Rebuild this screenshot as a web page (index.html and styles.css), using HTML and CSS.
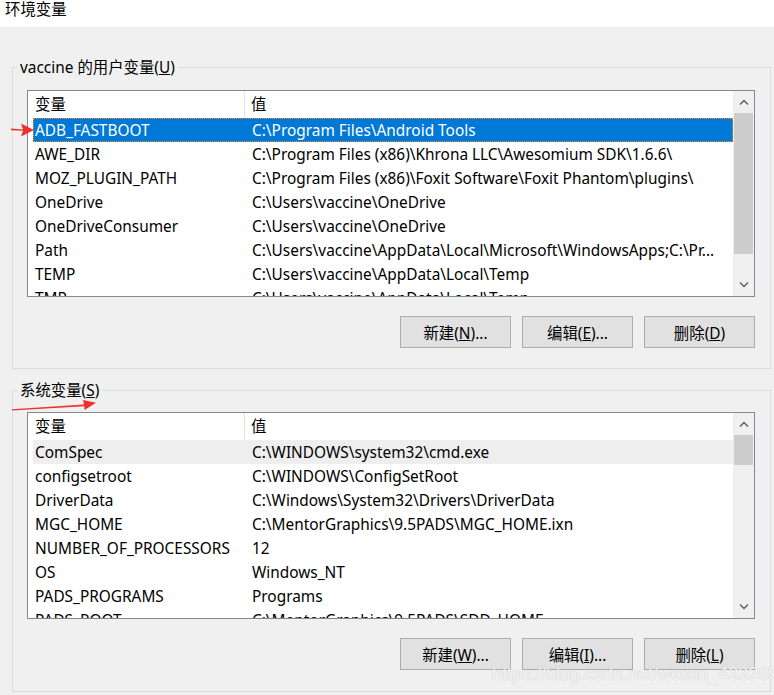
FILE: index.html
```html
<!DOCTYPE html>
<html lang="zh-CN">
<head>
<meta charset="utf-8">
<title>环境变量</title>
<link rel="stylesheet" href="styles.css">
</head>
<body>
<div class="window">
  <div class="titlebar">环境变量</div>
  <div class="content">
    <fieldset class="group group-user">
      <legend>vaccine 的用户变量(<u>U</u>)</legend>
      <div class="group-body">
        <div class="list">
          <div class="list-main">
            <div class="list-head">
              <div class="hcell">变量</div>
              <div class="hcell hcell-val">值</div>
            </div>
            <div class="list-rows">
              <div class="row selected"><span class="c1">ADB_FASTBOOT</span><span class="c2">C:\Program Files\Android Tools</span></div>
              <div class="row"><span class="c1">AWE_DIR</span><span class="c2">C:\Program Files (x86)\Khrona LLC\Awesomium SDK\1.6.6\</span></div>
              <div class="row"><span class="c1">MOZ_PLUGIN_PATH</span><span class="c2">C:\Program Files (x86)\Foxit Software\Foxit Phantom\plugins\</span></div>
              <div class="row"><span class="c1">OneDrive</span><span class="c2">C:\Users\vaccine\OneDrive</span></div>
              <div class="row"><span class="c1">OneDriveConsumer</span><span class="c2">C:\Users\vaccine\OneDrive</span></div>
              <div class="row"><span class="c1">Path</span><span class="c2">C:\Users\vaccine\AppData\Local\Microsoft\WindowsApps;C:\Pr...</span></div>
              <div class="row"><span class="c1">TEMP</span><span class="c2">C:\Users\vaccine\AppData\Local\Temp</span></div>
              <div class="row"><span class="c1">TMP</span><span class="c2">C:\Users\vaccine\AppData\Local\Temp</span></div>
            </div>
          </div>
          <div class="scrollbar">
            <div class="sb-btn"><svg width="10" height="6" viewBox="0 0 10 6"><path d="M1 5.5 L5 1.5 L9 5.5" fill="none" stroke="#606060" stroke-width="1.5"/></svg></div>
            <div class="sb-thumb" style="height:141px"></div>
            <div class="sb-track"></div>
            <div class="sb-btn"><svg width="10" height="6" viewBox="0 0 10 6"><path d="M1 0.5 L5 4.5 L9 0.5" fill="none" stroke="#606060" stroke-width="1.5"/></svg></div>
          </div>
        </div>
        <div class="buttons">
          <button class="btn">新建(<u>N</u>)...</button>
          <button class="btn">编辑(<u>E</u>)...</button>
          <button class="btn">删除(<u>D</u>)</button>
        </div>
      </div>
    </fieldset>

    <fieldset class="group group-sys">
      <legend>系统变量(<u>S</u>)</legend>
      <div class="group-body">
        <div class="list">
          <div class="list-main">
            <div class="list-head">
              <div class="hcell">变量</div>
              <div class="hcell hcell-val">值</div>
            </div>
            <div class="list-rows">
              <div class="row hover"><span class="c1">ComSpec</span><span class="c2">C:\WINDOWS\system32\cmd.exe</span></div>
              <div class="row"><span class="c1">configsetroot</span><span class="c2">C:\WINDOWS\ConfigSetRoot</span></div>
              <div class="row"><span class="c1">DriverData</span><span class="c2">C:\Windows\System32\Drivers\DriverData</span></div>
              <div class="row"><span class="c1">MGC_HOME</span><span class="c2">C:\MentorGraphics\9.5PADS\MGC_HOME.ixn</span></div>
              <div class="row"><span class="c1">NUMBER_OF_PROCESSORS</span><span class="c2">12</span></div>
              <div class="row"><span class="c1">OS</span><span class="c2">Windows_NT</span></div>
              <div class="row"><span class="c1">PADS_PROGRAMS</span><span class="c2">Programs</span></div>
              <div class="row"><span class="c1">PADS_ROOT</span><span class="c2">C:\MentorGraphics\9.5PADS\SDD_HOME</span></div>
            </div>
          </div>
          <div class="scrollbar">
            <div class="sb-btn"><svg width="10" height="6" viewBox="0 0 10 6"><path d="M1 5.5 L5 1.5 L9 5.5" fill="none" stroke="#606060" stroke-width="1.5"/></svg></div>
            <div class="sb-thumb" style="height:30px"></div>
            <div class="sb-track"></div>
            <div class="sb-btn"><svg width="10" height="6" viewBox="0 0 10 6"><path d="M1 0.5 L5 4.5 L9 0.5" fill="none" stroke="#606060" stroke-width="1.5"/></svg></div>
          </div>
        </div>
        <div class="buttons">
          <button class="btn">新建(<u>W</u>)...</button>
          <button class="btn">编辑(<u>I</u>)...</button>
          <button class="btn">删除(<u>L</u>)</button>
        </div>
      </div>
    </fieldset>
  </div>

  <svg class="arrow arrow-1" width="40" height="20" viewBox="0 0 40 20">
    <polygon points="11,8.6 23,9.4 21,3.5 34,10 21,16.5 23,10.8 11,10.2" fill="#f0302f"/>
  </svg>
  <svg class="arrow arrow-2" width="100" height="16" viewBox="0 0 100 16">
    <polygon points="12,14.2 84,9.6 83,5 96,7.8 84.5,15 84.3,11.3 12,15.4" fill="#f0302f"/>
  </svg>
  <div class="watermark">https://blog.csdn.net/weixin_43326587</div>
</div>
</body>
</html>
```

FILE: styles.css
```css
* { box-sizing: border-box; }

html, body {
  margin: 0;
  padding: 0;
  background: #f0f0f0;
}

body {
  font-family: "Noto Sans", "Noto Sans CJK SC", sans-serif;
  font-size: 15.4px;
  color: #000;
}

.window {
  position: relative;
  width: 774px;
  height: 695px;
  overflow: hidden;
  background: #f0f0f0;
}

.titlebar {
  height: 27px;
  background: #fff;
  padding: 0 0 0 5px;
  line-height: 20px;
  font-size: 15.4px;
}

.content {
  padding: 30px 3px 0 12px;
  display: flex;
  flex-direction: column;
  gap: 11px;
}

.group {
  margin: 0;
  padding: 0;
  border: 1px solid #dcdcdc;
  min-width: 0;
}

.group legend {
  margin-left: 4px;
  padding: 1px 3px 0;
  line-height: 20px;
  font-size: 15.4px;
}

.group-body {
  padding: 12px 15px 20px 14px;
}

.group-sys .group-body {
  padding-top: 11px;
  padding-bottom: 21px;
}

.list {
  display: flex;
  height: 207px;
  border: 1px solid #828790;
  background: #fff;
}

.list-main {
  flex: 1;
  min-width: 0;
  overflow: hidden;
  display: flex;
  flex-direction: column;
}

.list-head {
  display: grid;
  grid-template-columns: 217px 1fr;
  height: 27px;
  flex: none;
}

.hcell {
  padding-left: 7px;
  line-height: 27px;
  border-right: 1px solid #e5e5e5;
}

.hcell-val {
  border-right: none;
  padding-left: 6px;
}

.list-rows {
  padding-left: 5px;
}

.row {
  display: grid;
  grid-template-columns: 212px 1fr;
  height: 24px;
  line-height: 25px;
  white-space: nowrap;
}

.row .c1 {
  padding-left: 2px;
  overflow: hidden;
}

.row .c2 {
  padding-left: 7px;
  overflow: hidden;
}

.row.selected {
  background: #0078d7;
  color: #fff;
  outline: 1px dotted #f08c1c;
  outline-offset: -1px;
}

.row.hover {
  background: #eeeeee;
}

.scrollbar {
  width: 21px;
  flex: none;
  background: #f0f0f0;
  display: flex;
  flex-direction: column;
}

.sb-btn {
  height: 22px;
  flex: none;
  display: flex;
  align-items: center;
  justify-content: center;
}

.sb-thumb {
  flex: none;
  margin: 0 1px;
  background: #cdcdcd;
}

.sb-track {
  flex: 1;
}

.buttons {
  display: flex;
  justify-content: flex-end;
  gap: 11px;
  margin-top: 19px;
}

.btn {
  width: 111px;
  height: 32px;
  border: 1px solid #adadad;
  background: #e1e1e1;
  font-family: "Noto Sans", "Noto Sans CJK SC", sans-serif;
  font-size: 15.4px;
  color: #000;
  padding: 0;
  margin: 0;
}

.arrow {
  position: absolute;
}

.arrow-1 {
  left: 0;
  top: 120px;
}

.arrow-2 {
  left: 0;
  top: 395px;
}

.watermark {
  position: absolute;
  left: 492px;
  top: 664px;
  font-family: "Liberation Sans", Arial, sans-serif;
  font-size: 18px;
  color: rgba(255, 255, 255, 0.85);
  text-shadow: 0 0 1px rgba(150, 150, 150, 0.7);
  white-space: nowrap;
}
```
